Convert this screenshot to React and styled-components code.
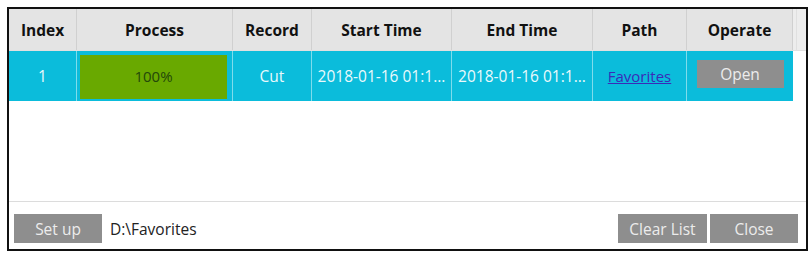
import React from "react";
import styled, { createGlobalStyle } from "styled-components";

const Global = createGlobalStyle`
  html, body { margin: 0; padding: 0; background: #fff; }
  body { font-family: "Open Sans", "Noto Sans", "DejaVu Sans", sans-serif; }
`;

const COLS = "68px 156px 79px 140px 141px 94px 106px";

const Frame = styled.div`
  margin: 7px 0 0 7px;
  width: 797px;
  height: 240px;
  border: 2px solid #111;
  display: flex;
  flex-direction: column;
  background: #fff;
`;

const TableArea = styled.div`
  flex: 1;
  display: flex;
  flex-direction: column;
  border-bottom: 1px solid #dcdcdc;
`;

const HeaderRow = styled.div`
  display: flex;
  height: 41px;
  background: #ececec;
  border-bottom: 1px solid #e0e0e0;
`;

const Grid = styled.div`
  display: grid;
  grid-template-columns: ${COLS};
  height: 100%;
`;

const HeadCell = styled.div`
  display: flex;
  align-items: center;
  justify-content: center;
  font-weight: 700;
  font-size: 15.5px;
  color: #111;
  background: #e4e4e4;
  border-right: 1px solid #d0d0d0;
`;

const Gutter = styled.div`
  flex: 1;
  background: #ededed;
  display: flex;
  justify-content: flex-start;
  padding-left: 3px;
`;

const GutterLine = styled.div`
  width: 1px;
  background: #e0e0e0;
`;

const DataRow = styled.div`
  display: flex;
  height: 50px;
`;

const Cell = styled.div`
  display: flex;
  align-items: center;
  justify-content: center;
  min-width: 0;
  background: #0bbcdb;
  color: #eaf9fc;
  font-size: 15.5px;
  border-right: 1px solid #7fdcec;
  padding: ${(p) => p.$pad || "0"};
  box-sizing: border-box;
  white-space: nowrap;
  &:last-child { border-right: none; }
`;

const Progress = styled.div`
  width: 100%;
  height: 100%;
  background: #69a900;
  color: #24480a;
  display: flex;
  justify-content: center;
  align-items: center;
  padding-bottom: 3px;
  box-sizing: border-box;
  font-size: 15px;
`;

const Link = styled.a`
  color: #3a2bb8;
  text-decoration: underline;
  font-size: 15px;
  cursor: pointer;
`;

const Button = styled.button`
  font-family: inherit;
  font-size: 15.5px;
  color: #ececec;
  background: #8e8e8e;
  border: none;
  border-radius: 0;
  width: ${(p) => p.$w || "88px"};
  height: ${(p) => p.$h || "29px"};
  margin-bottom: ${(p) => p.$mb || "0"};
  padding: 0;
  display: flex;
  align-items: center;
  justify-content: center;
`;

const Footer = styled.div`
  display: flex;
  align-items: center;
  height: 47px;
  padding: 9px 8px 3px 5px;
  box-sizing: border-box;
  gap: 8px;
`;

const PathText = styled.span`
  font-size: 15.5px;
  color: #222;
  flex: 1;
`;

const RightButtons = styled.div`
  display: flex;
  gap: 3px;
`;

const heads = ["Index", "Process", "Record", "Start Time", "End Time", "Path", "Operate"];

export default function App() {
  return (
    <>
      <Global />
      <Frame>
        <TableArea>
          <HeaderRow>
            <Grid>
              {heads.map((h) => (
                <HeadCell key={h}>{h}</HeadCell>
              ))}
            </Grid>
            <Gutter>
              <GutterLine />
            </Gutter>
          </HeaderRow>
          <DataRow>
            <Grid>
              <Cell>1</Cell>
              <Cell $pad="4px 5px 2px 3px">
                <Progress>100%</Progress>
              </Cell>
              <Cell>Cut</Cell>
              <Cell>2018-01-16 01:1...</Cell>
              <Cell>2018-01-16 01:1...</Cell>
              <Cell><Link>Favorites</Link></Cell>
              <Cell>
                <Button $w="87px" $h="28px" $mb="4px">Open</Button>
              </Cell>
            </Grid>
          </DataRow>
        </TableArea>
        <Footer>
          <Button>Set up</Button>
          <PathText>D:\Favorites</PathText>
          <RightButtons>
            <Button $w="89px">Clear List</Button>
            <Button>Close</Button>
          </RightButtons>
        </Footer>
      </Frame>
    </>
  );
}
